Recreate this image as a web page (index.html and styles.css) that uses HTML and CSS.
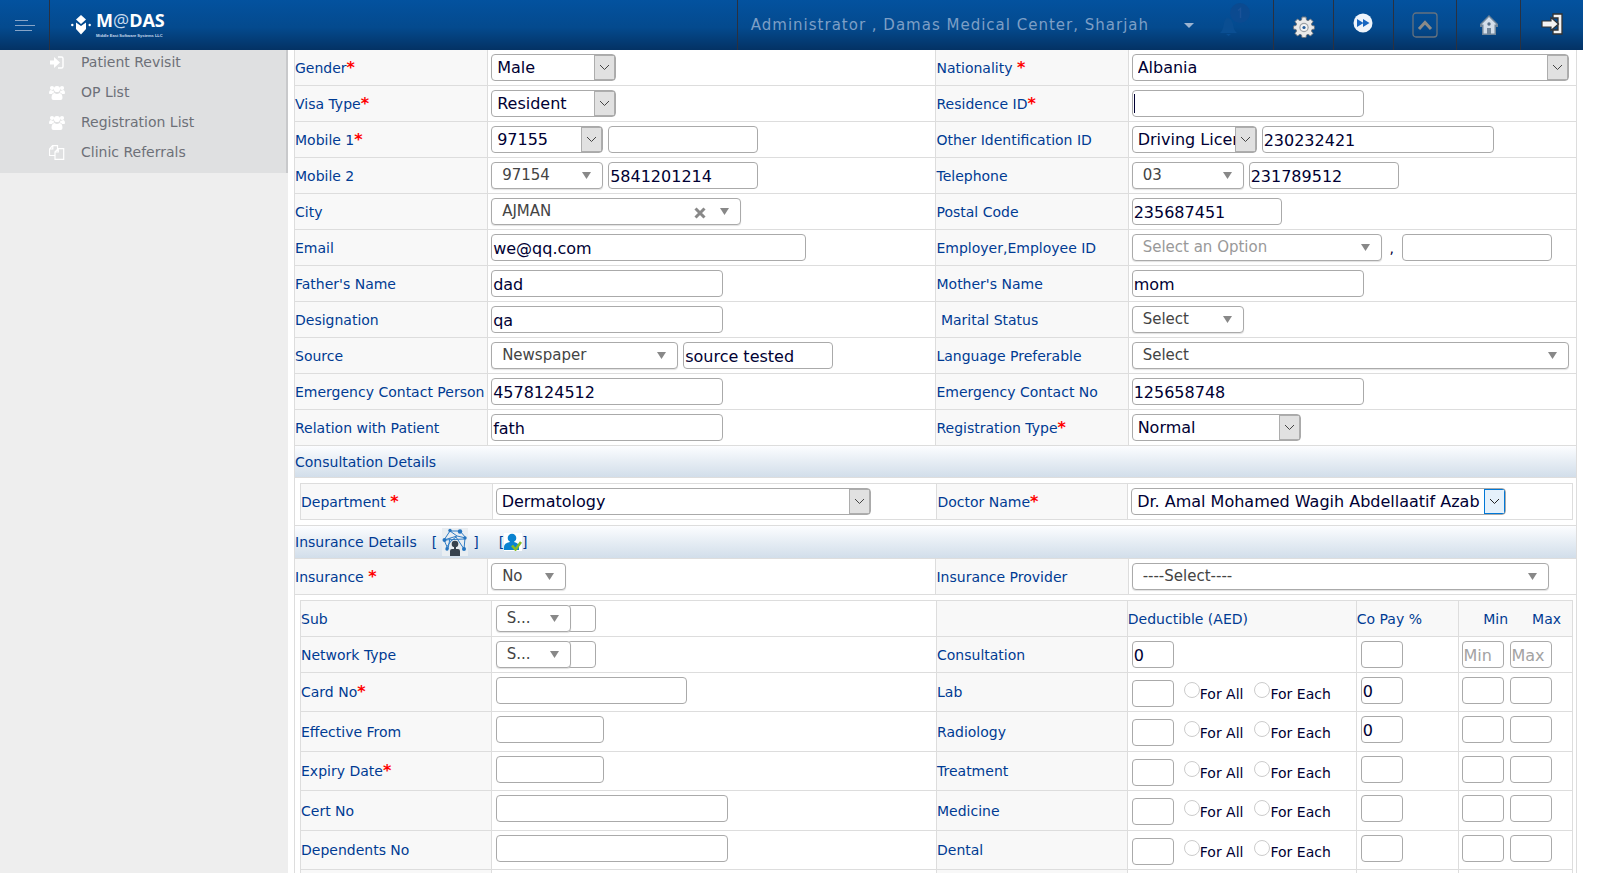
FILE: index.html
```html
<!DOCTYPE html>
<html lang="en">
<head>
<meta charset="utf-8">
<title>Patient Registration</title>
<link rel="stylesheet" href="styles.css">
</head>
<body>
<svg width="0" height="0" class="defs" aria-hidden="true">
  <symbol id="users" viewBox="0 0 16 15"><circle cx="3" cy="3" r="2.1"/><circle cx="13" cy="3" r="2.1"/><circle cx="8" cy="4" r="3.1"/><path d="M0 8.2C0 6 1 5 2 5c1 1 2 .9 2.6.5C4.700 6.600 5 7 5.500 7.600 4 7.800 3.500 8.500 3 9H1Q0 9 0 8.200zM16 8.200C16 6 15 5 14 5c-1 1-2 .9-2.600.5-.1 1.100-.4 1.500-.9 2.100 1.500.2 2 .9 2.500 1.400h2q1 0 1-.8zM5.500 8q2.500 2 5 0c2 .2 3 2 3 5q0 2-2 2h-7q-2 0-2-2c0-3 1-4.800 3-5z"/></symbol>
</svg>
<header class="topbar">
  <button class="burger" type="button" aria-label="Toggle menu"><svg width="20" height="13" viewBox="0 0 20 13"><path d="M0 1.500h13M0 6.500h20M0 11.500h17" stroke="#87a4c7" stroke-width="1"/></svg></button>
  <a class="brand" href="#" aria-label="MeDAS">
    <svg class="brand-mark" width="20" height="20" viewBox="0 0 20 20" fill="#fff"><path d="M10 0l5 4.500L10 9 5 4.500zM5 7.500l5 3.500 5-3.500V14l-5 5.500L5 14z"/><circle cx="1.300" cy="10" r="1.200"/><circle cx="18.700" cy="10" r="1.200"/></svg>
    <span class="brand-words"><span class="brand-name">M<span class="brand-e">@</span>DAS</span><span class="brand-sub">Middle East Software Systems LLC</span></span>
  </a>
  <button class="account" type="button"><span>Administrator , Damas Medical Center, Sharjah</span><svg width="10" height="5" viewBox="0 0 10 5"><path d="M0 0h10L5 5z" fill="#9db4d0"/></svg></button>
  <button class="bell" type="button" aria-label="Notifications"><svg width="32" height="34" viewBox="0 0 32 34"><path d="M1 31c3-3 3-5 4-10 1-4 2-5 4-5s4 2 5 6c1 5 1 6 4 9zM7 32h5l-2.500 2z" fill="#0a4e92"/><circle cx="21" cy="11" r="10" fill="#0b4a90"/><path d="M19 8.500l2.500-2V16" fill="none" stroke="#1a5297" stroke-width="1.500"/></svg></button>
  <a class="tool" href="#" aria-label="Settings"><svg width="22" height="22" viewBox="0 0 22 22"><g fill="#e9e9e9" stroke="#6d7680" stroke-width="1"><path d="M9 1h4l.5 3 1.500.7 2.500-1.700 2.600 2.600L18.400 8l.6 1.500 2.500.5v3l-2.500.5-.6 1.500 1.700 2.400-2.600 2.600-2.500-1.700-1.500.7-.5 2.500H9l-.5-2.500-1.500-.7L4.500 20 2 17.400 3.600 15 3 13.500.5 13v-3L3 9.500 3.600 8 2 5.600 4.500 3 7 4.700 8.500 4z"/></g><circle cx="11" cy="11.500" r="4.700" fill="#9da1a6"/><circle cx="11" cy="11.500" r="3.500" fill="#f4f4f4"/><circle cx="11" cy="11.500" r="1.600" fill="#245d9d"/></svg></a>
  <a class="tool tool-next" href="#" aria-label="Next"><svg width="20" height="20" viewBox="0 0 20 20"><circle cx="10" cy="10" r="9.500" fill="#eef4fb"/><path d="M4 6l6.500 4L4 14zM10 6l6.500 4-6.500 4z" fill="#1565c0"/></svg></a>
  <a class="tool tool-up" href="#" aria-label="Scroll to top"><svg width="26" height="26" viewBox="0 0 26 26" fill="none"><rect x="1" y="1" width="24" height="24" rx="3" stroke="#65727f" stroke-width="1.300"/><path d="M7 17l6-6.500 6 6.500" stroke="#8b8b88" stroke-width="3"/></svg></a>
  <a class="tool tool-home" href="#" aria-label="Home"><svg width="20" height="22" viewBox="0 0 20 22"><path d="M10 1L1 10v3h2v8h14v-8h2v-3z" fill="#71869b"/><path d="M10 3l-7.500 7.500h2V19.500H8V14h4v5.500h3.500v-9h2z" fill="#d4deea"/><circle cx="10" cy="10" r="1.700" fill="#566d87"/></svg></a>
  <a class="tool tool-exit" href="#" aria-label="Log out"><svg width="22" height="22" viewBox="0 0 22 22"><path d="M12 1h9v20h-9v-4h5V5h-5z" fill="#f3f3f3" stroke="#333" stroke-width="1.300"/><path d="M1 8h9V4.500L17.500 11 10 17.500V14H1z" fill="#f3f3f3" stroke="#333" stroke-width="1.200"/></svg></a>
</header>
<div class="page">
  <nav class="sidebar">
    <ul class="menu">
      <li><a href="#"><svg width="16" height="15" viewBox="0 0 16 15"><path d="M1 5.500h4V2l6 5.500-6 5.500V9.500H1z"/><path d="M9 2h3.500q1.500 0 1.500 1.500v8q0 1.500-1.500 1.500H9" fill="none" stroke="#fff" stroke-width="1.400"/></svg>Patient Revisit</a></li>
      <li><a href="#"><svg width="16" height="15"><use href="#users"/></svg>OP List</a></li>
      <li><a href="#"><svg width="16" height="15"><use href="#users"/></svg>Registration List</a></li>
      <li><a href="#"><svg width="16" height="15" viewBox="0 0 16 15" ><path d="M5.500 10.500h-5V4L3.500.7h5v3M3.800.7V4H.5M6 7l3.200-3.300h5.500v10.600H6zM9.300 3.700V7H6" fill="none" stroke="#fff" stroke-width="1.200"/></svg>Clinic Referrals</a></li>
    </ul>
  </nav>
  <main class="content">
    <form class="sheet">
      <div class="row">
        <label class="name" for="gender">Gender<b>*</b></label><div class="field"><select id="gender" class="pick w-m"><option>Male</option></select></div>
        <label class="name" for="nation">Nationality <b>*</b></label><div class="field"><select id="nation" class="pick w-full"><option>Albania</option></select></div>
      </div>
      <div class="row">
        <label class="name" for="visa">Visa Type<b>*</b></label><div class="field"><select id="visa" class="pick w-m"><option>Resident</option></select></div>
        <label class="name" for="resid">Residence ID<b>*</b></label><div class="field"><span class="caret"><input id="resid" class="w-l"></span></div>
      </div>
      <div class="row">
        <label class="name" for="mob1">Mobile 1<b>*</b></label><div class="field"><select class="pick w-s" aria-label="Mobile 1 code"><option>97155</option></select><input id="mob1" class="w-n"></div>
        <label class="name" for="otherid">Other Identification ID</label><div class="field"><select class="pick w-m" aria-label="Identification type"><option>Driving License</option></select><input id="otherid" class="w-l" value="230232421"></div>
      </div>
      <div class="row">
        <label class="name" for="mob2">Mobile 2</label><div class="field"><select class="drop w-s" aria-label="Mobile 2 code"><option>97154</option></select><input id="mob2" class="w-n" value="5841201214"></div>
        <label class="name" for="tel">Telephone</label><div class="field"><select class="drop w-s" aria-label="Area code"><option>03</option></select><input id="tel" class="w-n" value="231789512"></div>
      </div>
      <div class="row">
        <label class="name" for="city">City</label><div class="field"><span class="clearable"><select id="city" class="drop w-x"><option>AJMAN</option></select><button type="button" class="clear" aria-label="Clear city"><svg width="12" height="12" viewBox="0 0 12 12"><path d="M1.500 1.500l9 9M10.500 1.500l-9 9" stroke="#888" stroke-width="3"/></svg></button></span></div>
        <label class="name" for="postal">Postal Code</label><div class="field"><input id="postal" class="w-n" value="235687451"></div>
      </div>
      <div class="row">
        <label class="name" for="email">Email</label><div class="field"><input id="email" class="w-mail" value="we@qq.com"></div>
        <label class="name" for="employer">Employer,Employee ID</label><div class="field"><select id="employer" class="drop w-x hint"><option>Select an Option</option></select><span class="comma">,</span><input class="w-n" aria-label="Employee ID"></div>
      </div>
      <div class="row">
        <label class="name" for="father">Father's Name</label><div class="field"><input id="father" class="w-l" value="dad"></div>
        <label class="name" for="mother">Mother's Name</label><div class="field"><input id="mother" class="w-l" value="mom"></div>
      </div>
      <div class="row">
        <label class="name" for="desig">Designation</label><div class="field"><input id="desig" class="w-l" value="qa"></div>
        <label class="name" for="marital">&nbsp;Marital Status</label><div class="field"><select id="marital" class="drop w-s"><option>Select</option></select></div>
      </div>
      <div class="row">
        <label class="name" for="source">Source</label><div class="field"><select id="source" class="drop w-source"><option>Newspaper</option></select><input class="w-n" aria-label="Source detail" value="source tested"></div>
        <label class="name" for="lang">Language Preferable</label><div class="field"><select id="lang" class="drop w-full"><option>Select</option></select></div>
      </div>
      <div class="row">
        <label class="name" for="ecp">Emergency Contact Person</label><div class="field"><input id="ecp" class="w-l" value="4578124512"></div>
        <label class="name" for="ecn">Emergency Contact No</label><div class="field"><input id="ecn" class="w-l" value="125658748"></div>
      </div>
      <div class="row">
        <label class="name" for="rel">Relation with Patient</label><div class="field"><input id="rel" class="w-l" value="fath"></div>
        <label class="name" for="regtype">Registration Type<b>*</b></label><div class="field"><select id="regtype" class="pick w-reg"><option>Normal</option></select></div>
      </div>
      <h2 class="section">Consultation Details</h2>
      <div class="inset">
        <div class="row boxed">
          <label class="name" for="dept">Department <b>*</b></label><div class="field"><select id="dept" class="pick w-wide"><option>Dermatology</option></select></div>
          <label class="name" for="doctor">Doctor Name<b>*</b></label><div class="field"><select id="doctor" class="pick hot w-wide"><option>Dr. Amal Mohamed Wagih Abdellaatif Azab</option></select></div>
        </div>
      </div>
      <h2 class="section section-tools">Insurance Details
        <a href="#" class="mark" aria-label="Insurance network">[ <svg width="26" height="28" viewBox="0 0 26 28"><rect width="26" height="28" fill="#e9eef2"/><g fill="none" stroke="#2f7cc4" stroke-width="1"><path d="M2 12L8 3l10 0 6 7-9-2-7-5M2 12l13-4M2 12l4 9 2-11M4 20l5-7 5-4 8 12 1-11M2 12l20-1"/></g><g fill="#2474c0"><circle cx="8" cy="2.500" r="1.700"/><circle cx="18" cy="3.500" r="2.200"/><circle cx="2.500" cy="12" r="2"/><circle cx="23" cy="10" r="1.700"/><circle cx="5" cy="21" r="1.700"/><circle cx="22" cy="21" r="2"/></g><circle cx="13" cy="16" r="3.300" fill="#38424d"/><path d="M12 18h2v3h2q2 0 2 2v5H8v-5q0-2 2-2h2z" fill="#38424d"/></svg> ]</a>
        <a href="#" class="mark" aria-label="Verify insured">[<svg width="18" height="18" viewBox="0 0 18 18"><rect width="18" height="18" fill="#fff"/><circle cx="8" cy="5" r="4.300" fill="#0a83d0"/><path d="M6 7h4v2q5 1 5 5v3H0v-3q0-4 6-5z" fill="#0a83d0"/><path d="M8 12.500l3.500 4L17 9" fill="none" stroke="#86bc25" stroke-width="2.600"/></svg>]</a>
      </h2>
      <div class="row">
        <label class="name" for="ins">Insurance <b>*</b></label><div class="field"><select id="ins" class="drop w-xs"><option>No</option></select></div>
        <label class="name" for="prov">Insurance Provider</label><div class="field"><select id="prov" class="drop w-prov"><option>----Select----</option></select></div>
      </div>
      <div class="inset">
        <table class="cover">
          <colgroup><col class="c-name"><col class="c-field"><col class="c-name"><col class="c-ded"><col class="c-pay"><col class="c-lim"></colgroup>
          <tbody>
          <tr><th scope="row"><label for="sub">Sub</label></th><td><div class="joined"><select id="sub" class="drop w-xs"><option>S...</option></select><input aria-label="Sub code"></div></td><th></th><th scope="col">Deductible (AED)</th><th scope="col">Co Pay %</th><th scope="col"><span class="limits"><span>Min</span><span>Max</span></span></th></tr>
          <tr><th scope="row"><label for="net">Network Type</label></th><td><div class="joined"><select id="net" class="drop w-xs"><option>S...</option></select><input aria-label="Network code"></div></td><th scope="row">Consultation</th><td><input class="w-t" value="0" aria-label="Consultation deductible"></td><td><input class="w-t" aria-label="Consultation co pay"></td><td><div class="pair"><input class="w-t" placeholder="Min" aria-label="Consultation min"><input class="w-t" placeholder="Max" aria-label="Consultation max"></div></td></tr>
          <tr class="tall"><th scope="row"><label for="card">Card No</label><b>*</b></th><td><input id="card" class="w-card"></td><th scope="row">Lab</th><td><div class="split"><input class="w-t" aria-label="Lab deductible"><label><input type="radio" name="lab">For All</label><label><input type="radio" name="lab">For Each</label></div></td><td><input class="w-t" value="0" aria-label="Lab co pay"></td><td><div class="pair"><input class="w-t" aria-label="Lab min"><input class="w-t" aria-label="Lab max"></div></td></tr>
          <tr class="tall"><th scope="row"><label for="eff">Effective From</label></th><td><input id="eff" class="w-date"></td><th scope="row">Radiology</th><td><div class="split"><input class="w-t" aria-label="Radiology deductible"><label><input type="radio" name="rad">For All</label><label><input type="radio" name="rad">For Each</label></div></td><td><input class="w-t" value="0" aria-label="Radiology co pay"></td><td><div class="pair"><input class="w-t" aria-label="Radiology min"><input class="w-t" aria-label="Radiology max"></div></td></tr>
          <tr class="tall"><th scope="row"><label for="exp">Expiry Date</label><b>*</b></th><td><input id="exp" class="w-date"></td><th scope="row">Treatment</th><td><div class="split"><input class="w-t" aria-label="Treatment deductible"><label><input type="radio" name="tre">For All</label><label><input type="radio" name="tre">For Each</label></div></td><td><input class="w-t" aria-label="Treatment co pay"></td><td><div class="pair"><input class="w-t" aria-label="Treatment min"><input class="w-t" aria-label="Treatment max"></div></td></tr>
          <tr class="tall"><th scope="row"><label for="cert">Cert No</label></th><td><input id="cert" class="w-l"></td><th scope="row">Medicine</th><td><div class="split"><input class="w-t" aria-label="Medicine deductible"><label><input type="radio" name="med">For All</label><label><input type="radio" name="med">For Each</label></div></td><td><input class="w-t" aria-label="Medicine co pay"></td><td><div class="pair"><input class="w-t" aria-label="Medicine min"><input class="w-t" aria-label="Medicine max"></div></td></tr>
          <tr class="tall"><th scope="row"><label for="depn">Dependents No</label></th><td><input id="depn" class="w-l"></td><th scope="row">Dental</th><td><div class="split"><input class="w-t" aria-label="Dental deductible"><label><input type="radio" name="den">For All</label><label><input type="radio" name="den">For Each</label></div></td><td><input class="w-t" aria-label="Dental co pay"></td><td><div class="pair"><input class="w-t" aria-label="Dental min"><input class="w-t" aria-label="Dental max"></div></td></tr>
          <tr class="tall"><th></th><td></td><th></th><td></td><td></td><td></td></tr>
          </tbody>
        </table>
      </div>
    </form>
  </main>
</div>
</body>
</html>
```

FILE: styles.css
```css
* { box-sizing: border-box; }
html, body { height: 100%; }
body {
  margin: 0;
  padding-right: 20px;
  display: flex;
  flex-direction: column;
  overflow: hidden;
  background: #fff;
  color: #000033;
  font: 14px/18px Verdana, "DejaVu Sans", sans-serif;
}
.defs { position: absolute; }
button { font: inherit; border: 0; background: none; padding: 0; cursor: pointer; }

.topbar {
  flex: none;
  display: flex;
  height: 50px;
  background: linear-gradient(#03529f, #044a8e 55%, #043264);
}
.topbar > * { display: flex; align-items: center; justify-content: center; border-left: 1px solid #2a3140; }
.topbar .burger { width: 49px; border: 0; }
.topbar .brand { margin-right: auto; padding-left: 21px; gap: 5px; color: #fff; text-decoration: none; }
.brand-words { display: flex; flex-direction: column; }
.brand-name { font: bold 18px/25px "Open Sans", sans-serif; margin-top: -4px; }
.brand-e { font-weight: 400; color: #c9dbee; }
.brand-sub { font: bold 4px/5px "Liberation Sans", sans-serif; color: #c9dbee; }
.topbar .account {
  gap: 35px;
  padding: 0 0 0 13px;
  color: #7d9fc6;
  font-size: 15px;
  letter-spacing: 1px;
}
.topbar .bell { width: 79px; border: 0; padding: 0 0 12px 3px; }
.topbar .tool { width: 60px; padding-top: 3px; }
.topbar .tool-next { padding: 0 2px 4px 0; }
.topbar .tool-up { width: 63px; padding: 0; }
.topbar .tool-home { width: 64px; padding: 0; }
.topbar .tool-exit { width: 63px; padding: 0 0 2px; }

.page { flex: 1; min-height: 0; display: flex; }
.sidebar { flex: none; width: 288px; background: #eee; }
.menu {
  margin: 0;
  padding: 0 0 9px 49px;
  display: grid;
  gap: 6px;
  list-style: none;
  background: #dfe0e1;
  border-right: 2px solid #c8c9cb;
}
.menu a {
  display: flex;
  align-items: center;
  gap: 16px;
  line-height: 24px;
  color: #6d7078;
  text-decoration: none;
}
.menu svg { fill: #fff; }

.content { flex: 1; min-width: 0; padding: 0 6px; overflow: hidden; }
.sheet { border: solid #ddd; border-width: 0 1px; color: #003b93; }
.row {
  display: grid;
  grid-template-columns: 15% 35% 15% 35%;
  border-bottom: 1px solid #ddd;
}
.name { display: flex; align-items: center; background: #f8f8f8; white-space: pre; }
.field { display: flex; align-items: center; gap: 5px; padding: 4px 7px 4px 3px; border-left: 1px solid #ddd; }
.field + .name { border-left: 1px solid #ddd; }
b { color: #f00; font-size: 16px; }

.section {
  margin: 0;
  display: flex;
  align-items: center;
  min-height: 32px;
  font-size: 14px;
  font-weight: 400;
  background: linear-gradient(#fcfdff, #e6edf4 50%, #d2deea);
  border-bottom: 1px solid #ddd;
}
.section-tools { min-height: 33px; gap: 15px; padding-bottom: 1px; }
.mark { display: flex; align-items: center; gap: 5px; color: inherit; text-decoration: none; }
.mark + .mark { gap: 0; margin-left: 5px; }
.inset { padding: 5px 3px 5px 5px; border-bottom: 1px solid #ddd; }
.boxed { border: 1px solid #ddd; }

input, select {
  height: 27px;
  margin: 0;
  padding: 1px 1px 0;
  border: 1px solid #aaa;
  border-radius: 4px;
  background: #fff;
  color: #000033;
  font: 16px/20px Verdana, "DejaVu Sans", sans-serif;
}
input::placeholder { color: #a3a3a3; opacity: 1; }
select { appearance: none; }
.pick {
  padding: 1px 21px 0 5px;
  background: #fff url("data:image/svg+xml,%3Csvg xmlns='http://www.w3.org/2000/svg' width='21' height='25'%3E%3Crect x='.5' y='.5' width='20' height='24' fill='%23e1e1e1' stroke='%23adadad'/%3E%3Cpath d='M6 10l4.500 4.500L15 10' fill='none' stroke='%23444'/%3E%3C/svg%3E") no-repeat right center;
}
.hot {
  background-image: url("data:image/svg+xml,%3Csvg xmlns='http://www.w3.org/2000/svg' width='21' height='25'%3E%3Crect x='.5' y='.5' width='20' height='24' fill='%23e5f1fb' stroke='%230078d7'/%3E%3Cpath d='M6 10l4.500 4.500L15 10' fill='none' stroke='%23222'/%3E%3C/svg%3E");
}
.drop {
  padding: 0 20px 2px 10px;
  color: #444;
  font-size: 15px;
  box-shadow: 0 1px 1px rgba(0, 0, 0, .12);
  background: #fff url("data:image/svg+xml,%3Csvg xmlns='http://www.w3.org/2000/svg' width='9' height='7'%3E%3Cpath d='M0 0h9L4.500 7z' fill='%23888'/%3E%3C/svg%3E") no-repeat right 11px center;
}
.hint { color: #999; }
.caret { position: relative; }
.caret::after { content: ""; position: absolute; left: 2px; top: 4px; width: 1px; height: 19px; background: #000033; }
.caret, .clearable { display: flex; }
.clearable { position: relative; }
.clear { position: absolute; right: 35px; top: 9px; display: flex; }
.comma { width: 10px; text-align: center; color: #000033; }

.w-full { width: 100%; }
.w-t { width: 42px; }
.w-xs { width: 75px; }
.w-date { width: 108px; }
.w-s { width: 112px; }
.w-m { width: 125px; }
.w-n { width: 150px; }
.w-reg { width: 169px; }
.w-source { width: 187px; }
.w-card { width: 191px; }
.w-l { width: 232px; }
.w-x { width: 250px; }
.w-mail { width: 315px; }
.w-wide { width: 375px; }
.w-prov { width: 417px; }

.cover { width: 100%; table-layout: fixed; border-collapse: collapse; }
.c-name { width: 15%; }
.c-field { width: 35%; }
.c-ded { width: 18%; }
.c-pay { width: 8%; }
.c-lim { width: 9%; }
.cover th, .cover td { height: 36px; padding: 0; border: 1px solid #ddd; font-weight: 400; text-align: left; }
.cover th { background: #f8f8f8; }
.cover td { padding: 4px 0 4px 4px; vertical-align: top; line-height: 0; }
.cover .tall > * { height: 39px; }
.cover .tall:nth-child(even) > * { height: 40px; }
.joined { display: flex; }
.joined .drop { position: relative; }
.joined input { width: 29px; margin-left: -4px; }
.limits { display: flex; justify-content: flex-end; gap: 24px; padding-right: 11px; }
.pair { display: flex; gap: 6px; margin-left: -1px; }
.split { display: flex; align-items: center; gap: 10px; padding-top: 3px; }
.split label { display: flex; align-items: center; color: #000033; line-height: 18px; white-space: nowrap; }
.split label + label { margin-left: 1px; }
.split input[type="radio"] { appearance: none; width: 16px; height: 16px; margin-bottom: 7px; border: 1px solid #ccc; border-radius: 50%; }
```
